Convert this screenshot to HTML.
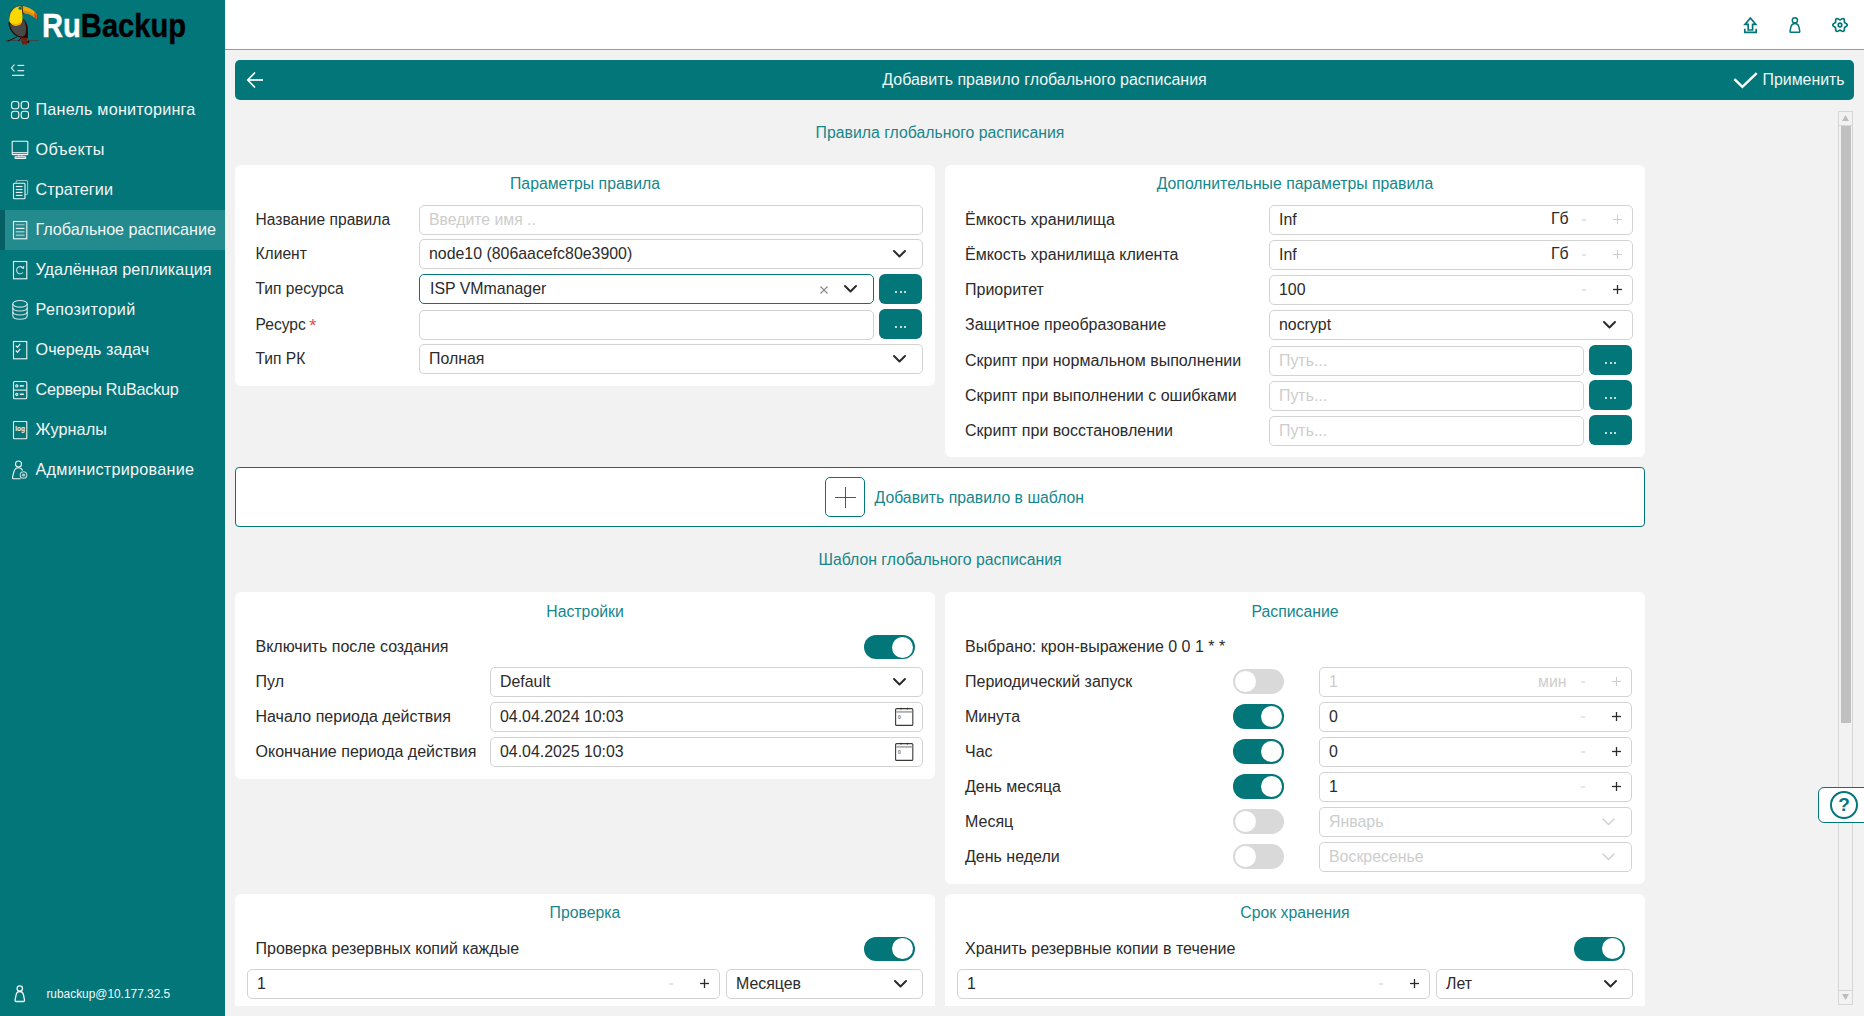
<!DOCTYPE html><html><head><meta charset="utf-8"><style>
html,body{margin:0;padding:0}
body{width:1864px;height:1016px;overflow:hidden;position:relative;background:#f2f2f2;font-family:"Liberation Sans",sans-serif}
.t{position:absolute;white-space:nowrap}
.b{position:absolute}
</style></head><body>
<div class="b" style="left:0px;top:0px;width:225px;height:1016px;background:#03767a;border-radius:0px;"></div>
<div class="b" style="left:225px;top:0px;width:1639px;height:49px;background:#fff;border-radius:0px;"></div>
<div class="b" style="left:225px;top:49px;width:1639px;height:1px;background:#9a9a9a;border-radius:0px;"></div>
<div class="b" style="left:0px;top:210px;width:225px;height:40px;background:#238a8e;border-radius:0px;"></div>
<div class="b" style="left:0px;top:210px;width:5px;height:40px;background:#055f63;border-radius:0px;"></div>
<div class="t" style="left:42px;top:5.8px;font-size:33.5px;line-height:40px;font-weight:bold;letter-spacing:0px;color:#000;-webkit-text-stroke:0.4px;transform:scaleX(0.87);transform-origin:0 0"><span style="color:#fff">Ru</span>Backup</div>
<div class="t" style="left:35.5px;top:100.07px;font-size:16.2px;line-height:18.63px;color:#f4f7f7;font-weight:normal;letter-spacing:0.206px">Панель мониторинга</div>
<div class="t" style="left:35.5px;top:140.07px;font-size:16.2px;line-height:18.63px;color:#f4f7f7;font-weight:normal;letter-spacing:0.367px">Объекты</div>
<div class="t" style="left:35.5px;top:180.07px;font-size:16.2px;line-height:18.63px;color:#f4f7f7;font-weight:normal;letter-spacing:0.062px">Стратегии</div>
<div class="t" style="left:35.5px;top:220.07px;font-size:16.2px;line-height:18.63px;color:#f4f7f7;font-weight:normal;letter-spacing:-0.065px">Глобальное расписание</div>
<div class="t" style="left:35.5px;top:260.07px;font-size:16.2px;line-height:18.63px;color:#f4f7f7;font-weight:normal;letter-spacing:0.068px">Удалённая репликация</div>
<div class="t" style="left:35.5px;top:300.07px;font-size:16.2px;line-height:18.63px;color:#f4f7f7;font-weight:normal;letter-spacing:0.330px">Репозиторий</div>
<div class="t" style="left:35.5px;top:340.07px;font-size:16.2px;line-height:18.63px;color:#f4f7f7;font-weight:normal;letter-spacing:0.050px">Очередь задач</div>
<div class="t" style="left:35.5px;top:380.07px;font-size:16.2px;line-height:18.63px;color:#f4f7f7;font-weight:normal;letter-spacing:-0.247px">Серверы RuBackup</div>
<div class="t" style="left:35.5px;top:420.07px;font-size:16.2px;line-height:18.63px;color:#f4f7f7;font-weight:normal;letter-spacing:0.117px">Журналы</div>
<div class="t" style="left:35.5px;top:460.07px;font-size:16.2px;line-height:18.63px;color:#f4f7f7;font-weight:normal;letter-spacing:0.256px">Администрирование</div>
<div class="t" style="left:46.4px;top:987.84px;font-size:11.9px;line-height:13.68px;color:#f4f7f7;font-weight:normal;">rubackup@10.177.32.5</div>
<div class="b" style="left:235px;top:60px;width:1619px;height:40px;background:#03767a;border-radius:5px;"></div>
<div class="t" style="left:544.5px;width:1000px;text-align:center;top:70.86px;font-size:16px;line-height:18.4px;color:#eef6f6;font-weight:normal;">Добавить правило глобального расписания</div>
<div class="t" style="left:1762.5px;top:71.05px;font-size:15.9px;line-height:18.29px;color:#eef6f6;font-weight:normal;">Применить</div>
<div class="t" style="left:440px;width:1000px;text-align:center;top:124.14px;font-size:15.8px;line-height:18.17px;color:#16868b;font-weight:normal;">Правила глобального расписания</div>
<div class="b" style="left:235px;top:165px;width:700px;height:221px;background:#fff;border-radius:6px;"></div>
<div class="b" style="left:945px;top:165px;width:700px;height:292px;background:#fff;border-radius:6px;"></div>
<div class="t" style="left:85px;width:1000px;text-align:center;top:175.14px;font-size:15.8px;line-height:18.17px;color:#16868b;font-weight:normal;">Параметры правила</div>
<div class="t" style="left:795px;width:1000px;text-align:center;top:175.14px;font-size:15.8px;line-height:18.17px;color:#16868b;font-weight:normal;">Дополнительные параметры правила</div>
<div class="t" style="left:255.5px;top:211.32px;font-size:15.6px;line-height:17.94px;color:#2b2b2b;font-weight:normal;">Название правила</div>
<div class="t" style="left:255.5px;top:245.32px;font-size:15.6px;line-height:17.94px;color:#2b2b2b;font-weight:normal;">Клиент</div>
<div class="t" style="left:255.5px;top:280.32px;font-size:15.6px;line-height:17.94px;color:#2b2b2b;font-weight:normal;">Тип ресурса</div>
<div class="t" style="left:255.5px;top:315.82px;font-size:15.6px;line-height:17.94px;color:#2b2b2b;font-weight:normal;">Ресурс</div>
<div class="t" style="left:255.5px;top:350.32px;font-size:15.6px;line-height:17.94px;color:#2b2b2b;font-weight:normal;">Тип РК</div>
<div class="b" style="left:419px;top:205px;width:504px;height:30px;box-sizing:border-box;border:1px solid #d3d3d3;border-radius:5px;background:#fff"></div>
<div class="t" style="left:429px;top:211.14px;font-size:15.8px;line-height:18.17px;color:#cdcdcd;font-weight:normal;">Введите имя ..</div>
<div class="b" style="left:419px;top:239px;width:504px;height:30px;box-sizing:border-box;border:1px solid #d3d3d3;border-radius:5px;background:#fff"></div>
<div class="t" style="left:429px;top:245.05px;font-size:15.9px;line-height:18.29px;color:#2b2b2b;font-weight:normal;">node10 (806aacefc80e3900)</div>
<svg class="b" style="left:892.0px;top:248.95px;" width="15" height="9.5" viewBox="0 0 15 9.5"><polyline points="2,2 7.5,7.5 13,2" fill="none" stroke="#2b2b2b" stroke-width="2" stroke-linecap="round" stroke-linejoin="round"/></svg>
<div class="b" style="left:419px;top:274px;width:455px;height:30px;box-sizing:border-box;border:1px solid #03767a;border-radius:5px;background:#fff"></div>
<div class="t" style="left:430px;top:280.05px;font-size:15.9px;line-height:18.29px;color:#2b2b2b;font-weight:normal;">ISP VMmanager</div>
<svg class="b" style="left:843.0px;top:283.95px;" width="15" height="9.5" viewBox="0 0 15 9.5"><polyline points="2,2 7.5,7.5 13,2" fill="none" stroke="#2b2b2b" stroke-width="2" stroke-linecap="round" stroke-linejoin="round"/></svg>
<div class="b" style="left:879px;top:274px;width:43px;height:30px;border-radius:6px;background:#03767a"></div>
<div class="b" style="left:895.1px;top:290.7px;width:2px;height:2px;background:#fff;border-radius:1px;"></div>
<div class="b" style="left:899.7px;top:290.7px;width:2px;height:2px;background:#fff;border-radius:1px;"></div>
<div class="b" style="left:904.3000000000001px;top:290.7px;width:2px;height:2px;background:#fff;border-radius:1px;"></div>
<div class="b" style="left:419px;top:310px;width:455px;height:30px;box-sizing:border-box;border:1px solid #d3d3d3;border-radius:5px;background:#fff"></div>
<div class="b" style="left:879px;top:309px;width:43px;height:30px;border-radius:6px;background:#03767a"></div>
<div class="b" style="left:895.1px;top:325.7px;width:2px;height:2px;background:#fff;border-radius:1px;"></div>
<div class="b" style="left:899.7px;top:325.7px;width:2px;height:2px;background:#fff;border-radius:1px;"></div>
<div class="b" style="left:904.3000000000001px;top:325.7px;width:2px;height:2px;background:#fff;border-radius:1px;"></div>
<div class="b" style="left:419px;top:344px;width:504px;height:30px;box-sizing:border-box;border:1px solid #d3d3d3;border-radius:5px;background:#fff"></div>
<div class="t" style="left:429px;top:350.05px;font-size:15.9px;line-height:18.29px;color:#2b2b2b;font-weight:normal;">Полная</div>
<svg class="b" style="left:892.0px;top:353.95px;" width="15" height="9.5" viewBox="0 0 15 9.5"><polyline points="2,2 7.5,7.5 13,2" fill="none" stroke="#2b2b2b" stroke-width="2" stroke-linecap="round" stroke-linejoin="round"/></svg>
<div class="t" style="left:965px;top:210.96px;font-size:16px;line-height:18.4px;color:#2b2b2b;font-weight:normal;">Ёмкость хранилища</div>
<div class="t" style="left:965px;top:245.96px;font-size:16px;line-height:18.4px;color:#2b2b2b;font-weight:normal;">Ёмкость хранилища клиента</div>
<div class="t" style="left:965px;top:280.96px;font-size:16px;line-height:18.4px;color:#2b2b2b;font-weight:normal;">Приоритет</div>
<div class="t" style="left:965px;top:315.96px;font-size:16px;line-height:18.4px;color:#2b2b2b;font-weight:normal;">Защитное преобразование</div>
<div class="t" style="left:965px;top:351.96px;font-size:16px;line-height:18.4px;color:#2b2b2b;font-weight:normal;">Скрипт при нормальном выполнении</div>
<div class="t" style="left:965px;top:386.96px;font-size:16px;line-height:18.4px;color:#2b2b2b;font-weight:normal;">Скрипт при выполнении с ошибками</div>
<div class="t" style="left:965px;top:421.96px;font-size:16px;line-height:18.4px;color:#2b2b2b;font-weight:normal;">Скрипт при восстановлении</div>
<div class="b" style="left:1269px;top:205px;width:364px;height:30px;box-sizing:border-box;border:1px solid #d3d3d3;border-radius:5px;background:#fff"></div>
<div class="b" style="left:1269px;top:240px;width:364px;height:30px;box-sizing:border-box;border:1px solid #d3d3d3;border-radius:5px;background:#fff"></div>
<div class="b" style="left:1269px;top:275px;width:364px;height:30px;box-sizing:border-box;border:1px solid #d3d3d3;border-radius:5px;background:#fff"></div>
<div class="b" style="left:1269px;top:310px;width:364px;height:30px;box-sizing:border-box;border:1px solid #d3d3d3;border-radius:5px;background:#fff"></div>
<div class="t" style="left:1279px;top:211.05px;font-size:15.9px;line-height:18.29px;color:#2b2b2b;font-weight:normal;">Inf</div>
<div class="t" style="left:1279px;top:246.05px;font-size:15.9px;line-height:18.29px;color:#2b2b2b;font-weight:normal;">Inf</div>
<div class="t" style="left:1279px;top:281.05px;font-size:15.9px;line-height:18.29px;color:#2b2b2b;font-weight:normal;">100</div>
<div class="t" style="left:1279px;top:316.05px;font-size:15.9px;line-height:18.29px;color:#2b2b2b;font-weight:normal;">nocrypt</div>
<svg class="b" style="left:1601.5px;top:319.95px;" width="15" height="9.5" viewBox="0 0 15 9.5"><polyline points="2,2 7.5,7.5 13,2" fill="none" stroke="#2b2b2b" stroke-width="2" stroke-linecap="round" stroke-linejoin="round"/></svg>
<div class="t" style="left:1551px;top:210.15px;font-size:15.9px;line-height:18.29px;color:#2b2b2b;font-weight:normal;">Гб</div>
<div class="t" style="left:1551px;top:245.15px;font-size:15.9px;line-height:18.29px;color:#2b2b2b;font-weight:normal;">Гб</div>
<svg class="b" style="left:1580.5px;top:218px;" width="6" height="4" viewBox="0 0 6 4"><line x1="0.8" y1="2" x2="5.2" y2="2" stroke="#cdcdcd" stroke-width="1"/></svg>
<svg class="b" style="left:1611.5px;top:213.8px;" width="11" height="11" viewBox="0 0 11 11"><g stroke="#cdcdcd" stroke-width="1.0"><line x1="1" y1="5.5" x2="10" y2="5.5"/><line x1="5.5" y1="1" x2="5.5" y2="10"/></g></svg>
<svg class="b" style="left:1580.5px;top:253px;" width="6" height="4" viewBox="0 0 6 4"><line x1="0.8" y1="2" x2="5.2" y2="2" stroke="#cdcdcd" stroke-width="1"/></svg>
<svg class="b" style="left:1611.5px;top:248.8px;" width="11" height="11" viewBox="0 0 11 11"><g stroke="#cdcdcd" stroke-width="1.0"><line x1="1" y1="5.5" x2="10" y2="5.5"/><line x1="5.5" y1="1" x2="5.5" y2="10"/></g></svg>
<svg class="b" style="left:1580.5px;top:288px;" width="6" height="4" viewBox="0 0 6 4"><line x1="0.8" y1="2" x2="5.2" y2="2" stroke="#cdcdcd" stroke-width="1"/></svg>
<svg class="b" style="left:1611.5px;top:283.8px;" width="11" height="11" viewBox="0 0 11 11"><g stroke="#2b2b2b" stroke-width="1.3"><line x1="1" y1="5.5" x2="10" y2="5.5"/><line x1="5.5" y1="1" x2="5.5" y2="10"/></g></svg>
<div class="b" style="left:1269px;top:346px;width:315px;height:30px;box-sizing:border-box;border:1px solid #d3d3d3;border-radius:5px;background:#fff"></div>
<div class="t" style="left:1279px;top:352.05px;font-size:15.9px;line-height:18.29px;color:#cdcdcd;font-weight:normal;">Путь...</div>
<div class="b" style="left:1589px;top:345px;width:43px;height:30px;border-radius:6px;background:#03767a"></div>
<div class="b" style="left:1605.1000000000001px;top:361.7px;width:2px;height:2px;background:#fff;border-radius:1px;"></div>
<div class="b" style="left:1609.7px;top:361.7px;width:2px;height:2px;background:#fff;border-radius:1px;"></div>
<div class="b" style="left:1614.3px;top:361.7px;width:2px;height:2px;background:#fff;border-radius:1px;"></div>
<div class="b" style="left:1269px;top:381px;width:315px;height:30px;box-sizing:border-box;border:1px solid #d3d3d3;border-radius:5px;background:#fff"></div>
<div class="t" style="left:1279px;top:387.05px;font-size:15.9px;line-height:18.29px;color:#cdcdcd;font-weight:normal;">Путь...</div>
<div class="b" style="left:1589px;top:380px;width:43px;height:30px;border-radius:6px;background:#03767a"></div>
<div class="b" style="left:1605.1000000000001px;top:396.7px;width:2px;height:2px;background:#fff;border-radius:1px;"></div>
<div class="b" style="left:1609.7px;top:396.7px;width:2px;height:2px;background:#fff;border-radius:1px;"></div>
<div class="b" style="left:1614.3px;top:396.7px;width:2px;height:2px;background:#fff;border-radius:1px;"></div>
<div class="b" style="left:1269px;top:416px;width:315px;height:30px;box-sizing:border-box;border:1px solid #d3d3d3;border-radius:5px;background:#fff"></div>
<div class="t" style="left:1279px;top:422.05px;font-size:15.9px;line-height:18.29px;color:#cdcdcd;font-weight:normal;">Путь...</div>
<div class="b" style="left:1589px;top:415px;width:43px;height:30px;border-radius:6px;background:#03767a"></div>
<div class="b" style="left:1605.1000000000001px;top:431.7px;width:2px;height:2px;background:#fff;border-radius:1px;"></div>
<div class="b" style="left:1609.7px;top:431.7px;width:2px;height:2px;background:#fff;border-radius:1px;"></div>
<div class="b" style="left:1614.3px;top:431.7px;width:2px;height:2px;background:#fff;border-radius:1px;"></div>
<div class="b" style="left:235px;top:467px;width:1410px;height:60px;box-sizing:border-box;border:1.5px solid #03767a;border-radius:4px;background:#fff"></div>
<div class="b" style="left:825px;top:477px;width:40px;height:40px;box-sizing:border-box;border:1.6px solid #03767a;border-radius:5px"></div>
<div class="b" style="left:835px;top:496.5px;width:21px;height:1.6px;background:#03767a;border-radius:0px;"></div>
<div class="b" style="left:844.7px;top:487px;width:1.6px;height:21px;background:#03767a;border-radius:0px;"></div>
<div class="t" style="left:874.5px;top:488.84px;font-size:15.8px;line-height:18.17px;color:#16868b;font-weight:normal;">Добавить правило в шаблон</div>
<div class="t" style="left:440px;width:1000px;text-align:center;top:551.14px;font-size:15.8px;line-height:18.17px;color:#16868b;font-weight:normal;">Шаблон глобального расписания</div>
<div class="b" style="left:235px;top:592px;width:700px;height:187px;background:#fff;border-radius:6px;"></div>
<div class="t" style="left:85px;width:1000px;text-align:center;top:602.64px;font-size:15.8px;line-height:18.17px;color:#16868b;font-weight:normal;">Настройки</div>
<div class="t" style="left:255.5px;top:637.96px;font-size:16px;line-height:18.4px;color:#2b2b2b;font-weight:normal;">Включить после создания</div>
<div class="b" style="left:864px;top:635px;width:50.5px;height:24.3px;border-radius:12.15px;background:#03767a"></div>
<div class="b" style="left:891.70px;top:636.50px;width:21.3px;height:21.3px;border-radius:50%;background:#fff"></div>
<div class="t" style="left:255.5px;top:672.96px;font-size:16px;line-height:18.4px;color:#2b2b2b;font-weight:normal;">Пул</div>
<div class="b" style="left:490px;top:667px;width:433px;height:30px;box-sizing:border-box;border:1px solid #d3d3d3;border-radius:5px;background:#fff"></div>
<div class="t" style="left:500px;top:673.05px;font-size:15.9px;line-height:18.29px;color:#2b2b2b;font-weight:normal;">Default</div>
<div class="t" style="left:255.5px;top:707.96px;font-size:16px;line-height:18.4px;color:#2b2b2b;font-weight:normal;">Начало периода действия</div>
<div class="b" style="left:490px;top:702px;width:433px;height:30px;box-sizing:border-box;border:1px solid #d3d3d3;border-radius:5px;background:#fff"></div>
<div class="t" style="left:500px;top:708.05px;font-size:15.9px;line-height:18.29px;color:#2b2b2b;font-weight:normal;">04.04.2024 10:03</div>
<div class="t" style="left:255.5px;top:742.96px;font-size:16px;line-height:18.4px;color:#2b2b2b;font-weight:normal;">Окончание периода действия</div>
<div class="b" style="left:490px;top:737px;width:433px;height:30px;box-sizing:border-box;border:1px solid #d3d3d3;border-radius:5px;background:#fff"></div>
<div class="t" style="left:500px;top:743.05px;font-size:15.9px;line-height:18.29px;color:#2b2b2b;font-weight:normal;">04.04.2025 10:03</div>
<svg class="b" style="left:892.0px;top:676.95px;" width="15" height="9.5" viewBox="0 0 15 9.5"><polyline points="2,2 7.5,7.5 13,2" fill="none" stroke="#2b2b2b" stroke-width="2" stroke-linecap="round" stroke-linejoin="round"/></svg>
<div class="b" style="left:945px;top:592px;width:700px;height:292px;background:#fff;border-radius:6px;"></div>
<div class="t" style="left:795px;width:1000px;text-align:center;top:602.64px;font-size:15.8px;line-height:18.17px;color:#16868b;font-weight:normal;">Расписание</div>
<div class="t" style="left:965px;top:637.96px;font-size:16px;line-height:18.4px;color:#2b2b2b;font-weight:normal;">Выбрано: крон-выражение 0 0 1 * *</div>
<div class="t" style="left:965px;top:672.96px;font-size:16px;line-height:18.4px;color:#2b2b2b;font-weight:normal;">Периодический запуск</div>
<div class="b" style="left:1233px;top:668.6px;width:51px;height:25.6px;border-radius:12.8px;background:#d9d9d9"></div>
<div class="b" style="left:1235.00px;top:670.90px;width:21px;height:21px;border-radius:50%;background:#fff"></div>
<div class="b" style="left:1319px;top:667px;width:313px;height:30px;box-sizing:border-box;border:1px solid #d3d3d3;border-radius:5px;background:#fff"></div>
<div class="t" style="left:965px;top:707.96px;font-size:16px;line-height:18.4px;color:#2b2b2b;font-weight:normal;">Минута</div>
<div class="b" style="left:1233.3px;top:704.4px;width:50.5px;height:24.3px;border-radius:12.15px;background:#03767a"></div>
<div class="b" style="left:1261.00px;top:705.90px;width:21.3px;height:21.3px;border-radius:50%;background:#fff"></div>
<div class="b" style="left:1319px;top:702px;width:313px;height:30px;box-sizing:border-box;border:1px solid #d3d3d3;border-radius:5px;background:#fff"></div>
<div class="t" style="left:965px;top:742.96px;font-size:16px;line-height:18.4px;color:#2b2b2b;font-weight:normal;">Час</div>
<div class="b" style="left:1233.3px;top:739.4px;width:50.5px;height:24.3px;border-radius:12.15px;background:#03767a"></div>
<div class="b" style="left:1261.00px;top:740.90px;width:21.3px;height:21.3px;border-radius:50%;background:#fff"></div>
<div class="b" style="left:1319px;top:737px;width:313px;height:30px;box-sizing:border-box;border:1px solid #d3d3d3;border-radius:5px;background:#fff"></div>
<div class="t" style="left:965px;top:777.96px;font-size:16px;line-height:18.4px;color:#2b2b2b;font-weight:normal;">День месяца</div>
<div class="b" style="left:1233.3px;top:774.4px;width:50.5px;height:24.3px;border-radius:12.15px;background:#03767a"></div>
<div class="b" style="left:1261.00px;top:775.90px;width:21.3px;height:21.3px;border-radius:50%;background:#fff"></div>
<div class="b" style="left:1319px;top:772px;width:313px;height:30px;box-sizing:border-box;border:1px solid #d3d3d3;border-radius:5px;background:#fff"></div>
<div class="t" style="left:965px;top:812.96px;font-size:16px;line-height:18.4px;color:#2b2b2b;font-weight:normal;">Месяц</div>
<div class="b" style="left:1233px;top:808.6px;width:51px;height:25.6px;border-radius:12.8px;background:#d9d9d9"></div>
<div class="b" style="left:1235.00px;top:810.90px;width:21px;height:21px;border-radius:50%;background:#fff"></div>
<div class="b" style="left:1319px;top:807px;width:313px;height:30px;box-sizing:border-box;border:1px solid #d3d3d3;border-radius:5px;background:#fff"></div>
<div class="t" style="left:965px;top:847.96px;font-size:16px;line-height:18.4px;color:#2b2b2b;font-weight:normal;">День недели</div>
<div class="b" style="left:1233px;top:843.6px;width:51px;height:25.6px;border-radius:12.8px;background:#d9d9d9"></div>
<div class="b" style="left:1235.00px;top:845.90px;width:21px;height:21px;border-radius:50%;background:#fff"></div>
<div class="b" style="left:1319px;top:842px;width:313px;height:30px;box-sizing:border-box;border:1px solid #d3d3d3;border-radius:5px;background:#fff"></div>
<div class="t" style="left:1329px;top:673.05px;font-size:15.9px;line-height:18.29px;color:#cdcdcd;font-weight:normal;">1</div>
<div class="t" style="left:1538px;top:672.55px;font-size:15.9px;line-height:18.29px;color:#cdcdcd;font-weight:normal;">мин</div>
<svg class="b" style="left:1580px;top:680px;" width="6" height="4" viewBox="0 0 6 4"><line x1="0.8" y1="2" x2="5.2" y2="2" stroke="#cdcdcd" stroke-width="1"/></svg>
<svg class="b" style="left:1611.0px;top:675.8px;" width="11" height="11" viewBox="0 0 11 11"><g stroke="#cdcdcd" stroke-width="1.0"><line x1="1" y1="5.5" x2="10" y2="5.5"/><line x1="5.5" y1="1" x2="5.5" y2="10"/></g></svg>
<div class="t" style="left:1329px;top:708.05px;font-size:15.9px;line-height:18.29px;color:#2b2b2b;font-weight:normal;">0</div>
<svg class="b" style="left:1580px;top:715px;" width="6" height="4" viewBox="0 0 6 4"><line x1="0.8" y1="2" x2="5.2" y2="2" stroke="#cdcdcd" stroke-width="1"/></svg>
<svg class="b" style="left:1611.0px;top:710.8px;" width="11" height="11" viewBox="0 0 11 11"><g stroke="#2b2b2b" stroke-width="1.3"><line x1="1" y1="5.5" x2="10" y2="5.5"/><line x1="5.5" y1="1" x2="5.5" y2="10"/></g></svg>
<div class="t" style="left:1329px;top:743.05px;font-size:15.9px;line-height:18.29px;color:#2b2b2b;font-weight:normal;">0</div>
<svg class="b" style="left:1580px;top:750px;" width="6" height="4" viewBox="0 0 6 4"><line x1="0.8" y1="2" x2="5.2" y2="2" stroke="#cdcdcd" stroke-width="1"/></svg>
<svg class="b" style="left:1611.0px;top:745.8px;" width="11" height="11" viewBox="0 0 11 11"><g stroke="#2b2b2b" stroke-width="1.3"><line x1="1" y1="5.5" x2="10" y2="5.5"/><line x1="5.5" y1="1" x2="5.5" y2="10"/></g></svg>
<div class="t" style="left:1329px;top:778.05px;font-size:15.9px;line-height:18.29px;color:#2b2b2b;font-weight:normal;">1</div>
<svg class="b" style="left:1580px;top:785px;" width="6" height="4" viewBox="0 0 6 4"><line x1="0.8" y1="2" x2="5.2" y2="2" stroke="#cdcdcd" stroke-width="1"/></svg>
<svg class="b" style="left:1611.0px;top:780.8px;" width="11" height="11" viewBox="0 0 11 11"><g stroke="#2b2b2b" stroke-width="1.3"><line x1="1" y1="5.5" x2="10" y2="5.5"/><line x1="5.5" y1="1" x2="5.5" y2="10"/></g></svg>
<div class="t" style="left:1329px;top:813.05px;font-size:15.9px;line-height:18.29px;color:#cdcdcd;font-weight:normal;">Январь</div>
<svg class="b" style="left:1600.5px;top:816.95px;" width="15" height="9.5" viewBox="0 0 15 9.5"><polyline points="2,2 7.5,7.5 13,2" fill="none" stroke="#d2d2d2" stroke-width="1.6" stroke-linecap="round" stroke-linejoin="round"/></svg>
<div class="t" style="left:1329px;top:848.05px;font-size:15.9px;line-height:18.29px;color:#cdcdcd;font-weight:normal;">Воскресенье</div>
<svg class="b" style="left:1600.5px;top:851.95px;" width="15" height="9.5" viewBox="0 0 15 9.5"><polyline points="2,2 7.5,7.5 13,2" fill="none" stroke="#d2d2d2" stroke-width="1.6" stroke-linecap="round" stroke-linejoin="round"/></svg>
<div class="b" style="left:235px;top:894px;width:700px;height:112px;background:#fff;border-radius:0px;border-radius:6px 6px 0 0"></div>
<div class="b" style="left:945px;top:894px;width:700px;height:112px;background:#fff;border-radius:0px;border-radius:6px 6px 0 0"></div>
<div class="t" style="left:85px;width:1000px;text-align:center;top:903.84px;font-size:15.8px;line-height:18.17px;color:#16868b;font-weight:normal;">Проверка</div>
<div class="t" style="left:795px;width:1000px;text-align:center;top:903.84px;font-size:15.8px;line-height:18.17px;color:#16868b;font-weight:normal;">Срок хранения</div>
<div class="t" style="left:255.5px;top:939.96px;font-size:16px;line-height:18.4px;color:#2b2b2b;font-weight:normal;">Проверка резервных копий каждые</div>
<div class="t" style="left:965px;top:939.96px;font-size:16px;line-height:18.4px;color:#2b2b2b;font-weight:normal;">Хранить резервные копии в течение</div>
<div class="b" style="left:864.2px;top:936.7px;width:50.5px;height:24.3px;border-radius:12.15px;background:#03767a"></div>
<div class="b" style="left:891.90px;top:938.20px;width:21.3px;height:21.3px;border-radius:50%;background:#fff"></div>
<div class="b" style="left:1574.3px;top:936.7px;width:50.5px;height:24.3px;border-radius:12.15px;background:#03767a"></div>
<div class="b" style="left:1602.00px;top:938.20px;width:21.3px;height:21.3px;border-radius:50%;background:#fff"></div>
<div class="b" style="left:247px;top:969px;width:473px;height:30px;box-sizing:border-box;border:1px solid #d3d3d3;border-radius:5px;background:#fff"></div>
<div class="t" style="left:257px;top:975.05px;font-size:15.9px;line-height:18.29px;color:#2b2b2b;font-weight:normal;">1</div>
<svg class="b" style="left:667.5px;top:982px;" width="6" height="4" viewBox="0 0 6 4"><line x1="0.8" y1="2" x2="5.2" y2="2" stroke="#cdcdcd" stroke-width="1"/></svg>
<svg class="b" style="left:698.5px;top:977.8px;" width="11" height="11" viewBox="0 0 11 11"><g stroke="#2b2b2b" stroke-width="1.3"><line x1="1" y1="5.5" x2="10" y2="5.5"/><line x1="5.5" y1="1" x2="5.5" y2="10"/></g></svg>
<div class="b" style="left:726px;top:969px;width:197px;height:30px;box-sizing:border-box;border:1px solid #d3d3d3;border-radius:5px;background:#fff"></div>
<div class="t" style="left:736px;top:975.05px;font-size:15.9px;line-height:18.29px;color:#2b2b2b;font-weight:normal;">Месяцев</div>
<svg class="b" style="left:892.7px;top:979.25px;" width="15" height="9.5" viewBox="0 0 15 9.5"><polyline points="2,2 7.5,7.5 13,2" fill="none" stroke="#2b2b2b" stroke-width="2" stroke-linecap="round" stroke-linejoin="round"/></svg>
<div class="b" style="left:957px;top:969px;width:473px;height:30px;box-sizing:border-box;border:1px solid #d3d3d3;border-radius:5px;background:#fff"></div>
<div class="t" style="left:967px;top:975.05px;font-size:15.9px;line-height:18.29px;color:#2b2b2b;font-weight:normal;">1</div>
<svg class="b" style="left:1377.5px;top:982px;" width="6" height="4" viewBox="0 0 6 4"><line x1="0.8" y1="2" x2="5.2" y2="2" stroke="#cdcdcd" stroke-width="1"/></svg>
<svg class="b" style="left:1408.5px;top:977.8px;" width="11" height="11" viewBox="0 0 11 11"><g stroke="#2b2b2b" stroke-width="1.3"><line x1="1" y1="5.5" x2="10" y2="5.5"/><line x1="5.5" y1="1" x2="5.5" y2="10"/></g></svg>
<div class="b" style="left:1436px;top:969px;width:197px;height:30px;box-sizing:border-box;border:1px solid #d3d3d3;border-radius:5px;background:#fff"></div>
<div class="t" style="left:1446px;top:975.05px;font-size:15.9px;line-height:18.29px;color:#2b2b2b;font-weight:normal;">Лет</div>
<svg class="b" style="left:1602.7px;top:979.25px;" width="15" height="9.5" viewBox="0 0 15 9.5"><polyline points="2,2 7.5,7.5 13,2" fill="none" stroke="#2b2b2b" stroke-width="2" stroke-linecap="round" stroke-linejoin="round"/></svg>
<div class="b" style="left:1838px;top:111px;width:15px;height:894px;box-sizing:border-box;border:1px solid #d6d6d6;background:#f2f2f2"></div>
<div class="b" style="left:1838px;top:111px;width:15px;height:15px;box-sizing:border-box;border:1px solid #d6d6d6;background:#f2f2f2"></div>
<svg class="b" style="left:1841px;top:114px;" width="9" height="8" viewBox="0 0 9 8"><polygon points="4.5,1 8,7 1,7" fill="#bdbdbd"/></svg>
<div class="b" style="left:1841px;top:126px;width:10px;height:597px;background:#c0c0c0;border-radius:0px;"></div>
<div class="b" style="left:1838px;top:990px;width:15px;height:15px;box-sizing:border-box;border:1px solid #d6d6d6;background:#f2f2f2"></div>
<svg class="b" style="left:1841px;top:993px;" width="9" height="8" viewBox="0 0 9 8"><polygon points="1,1 8,1 4.5,7" fill="#bdbdbd"/></svg>
<div class="b" style="left:1818px;top:787px;width:60px;height:36px;box-sizing:border-box;border:1.5px solid #03767a;border-radius:6px;background:#fff"></div>
<div class="b" style="left:1830px;top:791px;width:28px;height:28px;box-sizing:border-box;border:2px solid #03767a;border-radius:50%"></div>
<div class="t" style="left:1836px;top:794px;width:16px;text-align:center;font-size:19px;line-height:22px;font-weight:bold;color:#03767a">?</div>
<svg class="b" style="left:10px;top:62px;" width="16" height="16" viewBox="0 0 16 16"><g fill="none" stroke="#f4f7f7" stroke-width="1.1"><polyline points="4.5,2.5 1.5,6 4.5,9.5"/><line x1="7.5" y1="3.4" x2="14.2" y2="3.4"/><line x1="7.5" y1="8.7" x2="14.2" y2="8.7"/><line x1="2" y1="13.3" x2="14.2" y2="13.3"/></g></svg>
<svg class="b" style="left:10px;top:100px;" width="20" height="20" viewBox="0 0 20 20"><g fill="none" stroke="#f4f7f7" stroke-width="1.1"><rect x="1.5" y="1.5" width="7.3" height="7.3" rx="2.5"/><rect x="11.2" y="1.5" width="7.3" height="7.3" rx="2.5"/><rect x="1.5" y="11.2" width="7.3" height="7.3" rx="2.5"/><rect x="11.2" y="11.2" width="7.3" height="7.3" rx="2.5"/></g></svg>
<svg class="b" style="left:11px;top:140px;" width="19" height="20" viewBox="0 0 19 20"><g fill="none" stroke="#f4f7f7" stroke-width="1.1"><rect x="1.2" y="1.2" width="15.6" height="13.4" rx="0.6"/><line x1="1.2" y1="12.7" x2="16.8" y2="12.7"/><line x1="7.9" y1="14.6" x2="7.9" y2="16.8" stroke-opacity="0.7"/><line x1="10.9" y1="14.6" x2="10.9" y2="16.8" stroke-opacity="0.7"/><rect x="4" y="16.9" width="10.8" height="1.6" rx="0.8"/></g></svg>
<svg class="b" style="left:12px;top:179px;" width="18" height="21" viewBox="0 0 18 21"><g fill="none" stroke="#f4f7f7" stroke-width="1.1"><path d="M4.2 3.5 V2.5 Q4.2 1.5 5.2 1.5 H14.5 Q15.6 1.5 15.6 2.6 V14.3 Q15.6 15.5 14.4 15.5 H13" stroke-opacity="0.6"/><rect x="1.5" y="4.3" width="11.5" height="15.4" rx="1"/><line x1="3.8" y1="7.5" x2="10.5" y2="7.5"/><line x1="3.8" y1="10.5" x2="10.5" y2="10.5"/><line x1="3.8" y1="13.4" x2="10.5" y2="13.4"/><line x1="3.8" y1="16.4" x2="10.5" y2="16.4"/></g></svg>
<svg class="b" style="left:12px;top:220px;" width="16" height="20" viewBox="0 0 16 20"><g fill="none" stroke="#f4f7f7" stroke-width="1.1"><rect x="1.5" y="1.5" width="13.3" height="17.3"/></g><g stroke="#f4f7f7" stroke-width="1.1"><line x1="3.8" y1="4.7" x2="12.5" y2="4.7" stroke-opacity="0.55"/><line x1="3.8" y1="8.4" x2="12.5" y2="8.4"/><line x1="3.8" y1="11.8" x2="12.5" y2="11.8" stroke-opacity="0.7"/><line x1="3.8" y1="15.2" x2="12.5" y2="15.2" stroke-opacity="0.7"/></g></svg>
<svg class="b" style="left:12px;top:260px;" width="16" height="20" viewBox="0 0 16 20"><g fill="none" stroke="#f4f7f7" stroke-width="1.1"><rect x="1.5" y="1.5" width="13.3" height="17.3"/><path d="M11.2 8.2 A3.6 3.6 0 1 0 11 12.5" stroke-opacity="0.8"/><polyline points="9.4,7.6 11.4,8.3 11.8,6.2" stroke-opacity="0.8"/></g></svg>
<svg class="b" style="left:11px;top:299px;" width="18" height="22" viewBox="0 0 18 22"><g fill="none" stroke="#f4f7f7" stroke-width="1.1" stroke-opacity="0.85"><ellipse cx="9" cy="4.8" rx="7.2" ry="3.3"/><path d="M1.8 4.8 V16.8 Q1.8 20.2 9 20.2 Q16.2 20.2 16.2 16.8 V4.8"/><path d="M1.8 8.8 Q1.8 12 9 12 Q16.2 12 16.2 8.8"/><path d="M1.8 12.8 Q1.8 16 9 16 Q16.2 16 16.2 12.8"/></g></svg>
<svg class="b" style="left:12px;top:340px;" width="16" height="20" viewBox="0 0 16 20"><g fill="none" stroke="#f4f7f7" stroke-width="1.1"><rect x="1.5" y="1.5" width="13.3" height="17.3"/><polyline points="3.8,5.6 5.5,7.4 8.2,3.9"/><polyline points="3.8,10.5 5.5,12.3 8.2,8.8"/></g></svg>
<svg class="b" style="left:12px;top:380px;" width="16" height="20" viewBox="0 0 16 20"><g fill="none" stroke="#f4f7f7" stroke-width="1.1"><rect x="1.5" y="1.5" width="13.3" height="17.3" rx="1.3"/><line x1="1.5" y1="10.1" x2="14.8" y2="10.1"/><circle cx="4.8" cy="5.9" r="1.1"/><circle cx="4.8" cy="14.3" r="1.1"/></g><g stroke="#f4f7f7" stroke-width="1.5"><line x1="7.8" y1="5.9" x2="11.8" y2="5.9"/><line x1="7.8" y1="14.3" x2="11.8" y2="14.3"/></g></svg>
<svg class="b" style="left:12px;top:420px;" width="16" height="20" viewBox="0 0 16 20"><g fill="none" stroke="#f4f7f7" stroke-width="1.1"><rect x="1.5" y="1.5" width="13.3" height="17.3" rx="0.8"/></g><text x="8.2" y="11.3" font-family="Liberation Sans" font-size="6.5" font-weight="bold" fill="#f4f7f7" text-anchor="middle">log</text></svg>
<svg class="b" style="left:11px;top:460px;" width="18" height="20" viewBox="0 0 18 20"><g fill="none" stroke="#f4f7f7" stroke-width="1.1"><circle cx="7.5" cy="4" r="3"/><path d="M9.5 18.8 H2.8 Q1.2 18.8 1.6 17 L3 11.5 Q4.2 7.8 7.5 7.8 Q10.4 7.8 11.5 10.5" /><circle cx="12.5" cy="15" r="3.3" stroke-opacity="0.8"/><circle cx="12.5" cy="15" r="1" stroke-opacity="0.8"/></g></svg>
<svg class="b" style="left:12px;top:984px;" width="16" height="20" viewBox="0 0 16 20"><g fill="none" stroke="#f4f7f7" stroke-width="1.3"><circle cx="7.8" cy="4.5" r="2.7"/><path d="M4.2 17.5 H11.4 Q12.7 17.5 12.5 16 L11.6 11.3 Q10.8 7.5 7.8 7.5 Q4.8 7.5 4 11.3 L3.1 16 Q2.9 17.5 4.2 17.5 Z"/></g></svg>
<svg class="b" style="left:1742px;top:15px;" width="18" height="20" viewBox="0 0 18 20"><g fill="none" stroke="#03767a" stroke-width="1.7"><path d="M8.4 3 L3 9.4 H6.2 V15 H10.6 V9.4 H13.8 Z" stroke-linejoin="miter"/><polyline points="2.8,13.8 2.8,17.4 14.2,17.4 14.2,13.8"/></g></svg>
<svg class="b" style="left:1787px;top:15px;" width="16" height="20" viewBox="0 0 16 20"><g fill="none" stroke="#03767a" stroke-width="1.5"><circle cx="7.9" cy="5.3" r="2.6"/><path d="M4.1 17.3 H11.7 Q13 17.3 12.7 15.9 L11.9 11.9 Q11.1 8.6 7.9 8.6 Q4.7 8.6 3.9 11.9 L3.1 15.9 Q2.8 17.3 4.1 17.3 Z"/></g></svg>
<svg class="b" style="left:1830px;top:15px;" width="20" height="20" viewBox="0 0 20 20"><g fill="none" stroke="#03767a" stroke-width="1.7"><polygon points="10.00,4.80 10.46,4.69 10.99,4.39 11.60,4.01 12.29,3.70 12.99,3.60 13.60,3.76 14.05,4.21 14.31,4.87 14.38,5.62 14.37,6.34 14.37,6.94 14.50,7.40 14.83,7.75 15.36,8.05 15.99,8.40 16.60,8.84 17.04,9.38 17.20,10.00 17.04,10.62 16.60,11.16 15.99,11.60 15.36,11.95 14.83,12.25 14.50,12.60 14.37,13.06 14.37,13.66 14.38,14.38 14.31,15.13 14.05,15.79 13.60,16.24 12.99,16.40 12.29,16.30 11.60,15.99 10.99,15.61 10.46,15.31 10.00,15.20 9.54,15.31 9.01,15.61 8.40,15.99 7.71,16.30 7.01,16.40 6.40,16.24 5.95,15.79 5.69,15.13 5.62,14.38 5.63,13.66 5.63,13.06 5.50,12.60 5.17,12.25 4.64,11.95 4.01,11.60 3.40,11.16 2.96,10.62 2.80,10.00 2.96,9.38 3.40,8.84 4.01,8.40 4.64,8.05 5.17,7.75 5.50,7.40 5.63,6.94 5.63,6.34 5.62,5.62 5.69,4.87 5.95,4.21 6.40,3.76 7.01,3.60 7.71,3.70 8.40,4.01 9.01,4.39 9.54,4.69"/><circle cx="10" cy="10" r="1.8"/></g></svg>
<svg class="b" style="left:245px;top:70px;" width="20" height="20" viewBox="0 0 20 20"><g fill="none" stroke="#fff" stroke-width="1.7"><polyline points="10,2.5 2.8,10 10,17.5"/><line x1="2.8" y1="10" x2="18" y2="10"/></g></svg>
<svg class="b" style="left:1732px;top:70px;" width="26" height="20" viewBox="0 0 26 20"><polyline points="2.4,9.1 10.4,16.8 24.7,3.2" fill="none" stroke="#fff" stroke-width="2.4"/></svg>
<svg class="b" style="left:819px;top:284.5px;" width="10" height="10" viewBox="0 0 10 10"><g stroke="#888" stroke-width="1.1"><line x1="1.5" y1="1.5" x2="8.5" y2="8.5"/><line x1="8.5" y1="1.5" x2="1.5" y2="8.5"/></g></svg>
<div class="t" style="left:309.2px;top:315.45px;font-size:18.5px;line-height:21.27px;color:#d9534f;font-weight:normal;">*</div>
<svg class="b" style="left:894px;top:707.0px;" width="20" height="20" viewBox="0 0 20 20"><rect x="1.6" y="1.6" width="17.2" height="16.8" rx="1" fill="none" stroke="#3a3a3a" stroke-width="1.1"/><rect x="2.2" y="3.9" width="16" height="1.9" fill="#b0b0b0"/><circle cx="7" cy="1.6" r="0.9" fill="#333"/><circle cx="13.4" cy="1.6" r="0.9" fill="#333"/><text x="4" y="11.8" font-family="Liberation Sans" font-size="5.2" font-weight="bold" fill="#777">0</text></svg>
<svg class="b" style="left:894px;top:742.0px;" width="20" height="20" viewBox="0 0 20 20"><rect x="1.6" y="1.6" width="17.2" height="16.8" rx="1" fill="none" stroke="#3a3a3a" stroke-width="1.1"/><rect x="2.2" y="3.9" width="16" height="1.9" fill="#b0b0b0"/><circle cx="7" cy="1.6" r="0.9" fill="#333"/><circle cx="13.4" cy="1.6" r="0.9" fill="#333"/><text x="4" y="11.8" font-family="Liberation Sans" font-size="5.2" font-weight="bold" fill="#777">0</text></svg>
<svg class="b" style="left:0px;top:0px;" width="45" height="50" viewBox="0 0 45 50">
<path d="M8.3 22.4 Q9 29 13.3 33.7 Q16 36.5 19.2 37.3 L24.7 38.4 L27.8 38.4 Q28.2 30 27.4 25.6 Q26 21 23.7 19.2 Z" fill="#2b0a06"/>
<path d="M9.7 23.7 Q12 26 15.6 26 Q19 25.8 21 24.2 Q23 22.5 23.7 20.1 Q26 23 26 27.4 Q26.2 31 25.6 33.7 Q24.5 36.3 22.4 36.4 Q19.5 36.5 17.9 35.5 Q14.5 33.5 13 31.5 Q10.5 28.5 9.7 23.7 Z" fill="#484848"/>
<path d="M21 37.6 L27.4 38 Q27.6 42 26.9 44.6 L22.4 44.6 Q21.5 41 21 37.6 Z" fill="#7a1c08"/>
<line x1="5.2" y1="40.5" x2="38.7" y2="40.5" stroke="#4d3b3b" stroke-width="0.8"/>
<path d="M7.4 41.4 L17 36.9 M18.3 41 L21.5 37.5" stroke="#2b0a06" stroke-width="1" fill="none"/>
<circle cx="28.3" cy="41.9" r="1.1" fill="#111"/>
<path d="M8.8 17.9 Q9 12 12 9 Q15.5 5.8 21.9 5.4 L22.4 12.4 L22.4 21 Q21 24.8 20.1 24.8 Q17 26 14.7 25.8 Q11.5 25 10.3 23 Q8.6 20.5 8.8 17.9 Z" fill="#474747"/>
<path d="M9.7 17 Q10 13.5 11.5 11.5 Q13.5 8.3 16.5 7 Q19 6.2 21.5 6.3 Q22.3 9.5 22.2 13.3 Q22.6 17.5 22.4 21 Q21.6 23.8 20.1 24.7 Q17.5 26 14.7 25.8 Q12 25.3 10.6 23.3 Q9.3 21.3 9.2 19.7 Z" fill="#f8d800"/>
<path d="M10.6 22.5 Q12 25 14.7 25.6 Q17.5 25.9 20.1 24.6 Q21.8 23.5 22.3 21.2 Q20 23.5 16.5 24 Q12.5 24 10.6 22.5 Z" fill="#f0a800"/>
<path d="M22.4 5.9 Q26 6.3 29.2 7.9 Q32.5 9.5 34.6 11.5 Q36.5 13.5 36.9 15.6 L36.9 18.8 Q35.5 17.8 34.6 17.4 Q31.5 15.2 29.2 14.2 Q26.5 13.3 24.7 13.3 Q23.2 13 22.4 12.4 Z" fill="#f8a800"/>
<path d="M22.6 10.2 Q26 10.5 29.2 11.8 Q32 13 34.6 15 L34.6 17.4 Q31.5 15.2 29.2 14.2 Q26.5 13.3 24.7 13.3 Q23.2 13 22.4 12.4 Z" fill="#d49212"/>
<path d="M34.2 12 Q36.3 13.6 36.9 15.6 L36.9 18.8 Q35.5 17.8 34.4 17.3 Z" fill="#dd4a20"/>
<path d="M21.9 5.6 L22.6 12.6 L24.3 13.8" stroke="#2a1208" stroke-width="0.9" fill="none"/>
<circle cx="20.1" cy="8.3" r="1.7" fill="#1b8a9a"/>
<circle cx="20.1" cy="8.3" r="0.7" fill="#0b3a2a"/>
</svg>
</body></html>
